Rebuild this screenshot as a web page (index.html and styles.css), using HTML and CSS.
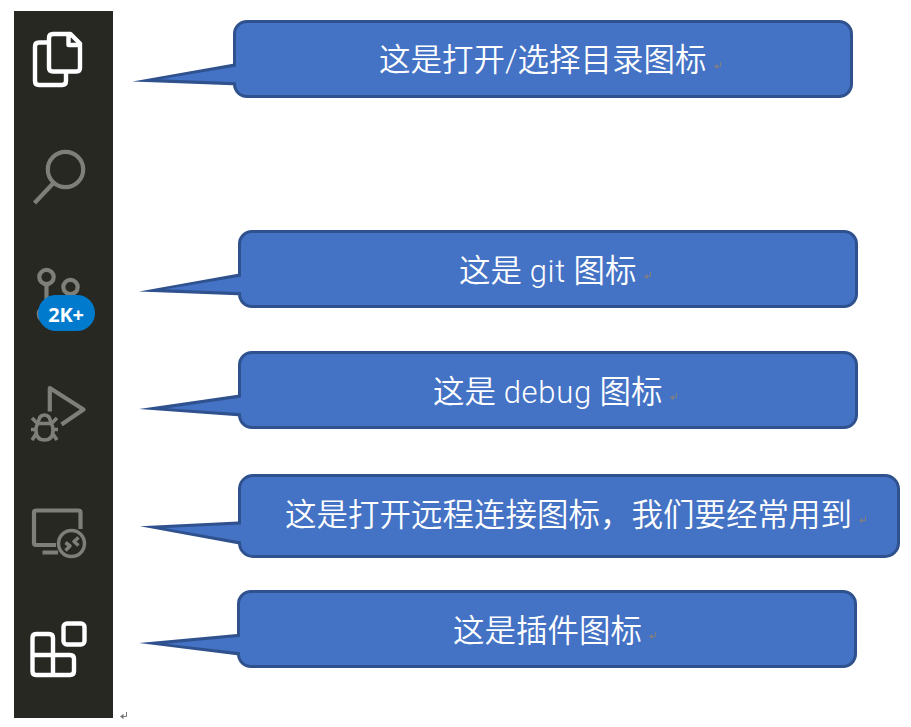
FILE: index.html
```html
<!DOCTYPE html>
<html lang="zh-CN">
<head>
<meta charset="utf-8">
<title>VS Code 图标说明</title>
<link rel="stylesheet" href="styles.css">
</head>
<body>
<svg class="defs" width="0" height="0" aria-hidden="true">
  <symbol id="ret" viewBox="0 0 8 8"><path d="M6.500 0V4.500H1.500" fill="none" stroke="currentColor" stroke-width="1"/><path d="M0 4.500L3.500 1.800V7.200Z" fill="currentColor"/></symbol>
</svg>
<main class="page">
  <nav class="bar">
    <svg class="icon bright" viewBox="0 0 99 118">
      <path d="M35 31.500H25Q21 31.500 21 35.500V70Q21 74 25 74H48Q52 74 52 70V62M39 23H56.500L66 32.500V57Q66 60.500 62.500 60.500H39Q35 60.500 35 57V27Q35 23 39 23ZM54.500 23V34H66" />
    </svg>
    <svg class="icon" viewBox="0 0 99 118">
      <circle cx="51.500" cy="40.500" r="17.700"/><path d="M39.500 54L20.500 74"/>
    </svg>
    <div class="scm">
      <svg class="icon" viewBox="0 0 99 118">
        <circle cx="32.500" cy="30" r="7.200"/><circle cx="56.500" cy="40" r="7.200"/><circle cx="32" cy="67" r="7.200"/><path d="M32.500 37V60M56.500 47Q56.500 58 43 58"/>
      </svg>
      <span class="badge">2K+</span>
    </div>
    <svg class="icon" viewBox="0 0 99 118">
      <path d="M35.800 46.500V23L69.500 44.500L47.500 59.500"/>
      <path class="bug" d="M22.500 58.500H38.500M24.500 58.500Q22 60 22 65Q22 75 30.500 75Q39 75 39 65Q39 60 36.500 58.500M24.500 58.500Q24.500 50 30.500 50Q36.500 50 36.500 58.500M18 53L23 58M17 64.500H22M22 69L18 75M43 53L38 58M44 64.500H39M39 69L43 75"/>
    </svg>
    <svg class="icon" viewBox="0 0 99 118">
      <path d="M66.500 46V29.500Q66.500 27.500 64.500 27.500H22Q20 27.500 20 29.500V60Q20 62 22 62H42M28.500 69.500H44"/>
      <circle class="thin" cx="57.500" cy="60.500" r="13"/>
      <path class="thin" d="M51.500 59.500L56 63L51.500 67.500M64.500 54.500L60 58.500L64.500 62.500"/>
    </svg>
    <svg class="icon bright" viewBox="0 0 99 118">
      <path d="M22 33H35Q39 33 39 37V54H56Q60 54 60 58V70Q60 74 56 74H22Q18.500 74 18.500 70V37Q18.500 33 22 33ZM18.500 54H39V74"/>
      <rect x="49.500" y="22.500" width="21" height="21" rx="3.500"/>
    </svg>
  </nav>
  <svg class="ret end"><use href="#ret"/></svg>
  <section class="notes">
    <div class="note n1">
      <svg class="tail" viewBox="0 0 108 84"><path class="edge" d="M3.500 61.400L104 43.800H107V65.300H104Z"/><path class="fill" d="M31 59.300L107.500 46.500V62.300Z"/></svg>
      <span class="text">这是打开/选择目录图标</span><svg class="ret"><use href="#ret"/></svg>
    </div>
    <div class="note n2">
      <svg class="tail" viewBox="0 0 108 84"><path class="edge" d="M5 61.400L104 43.800H107V65.300H104Z"/><path class="fill" d="M31 59.300L107.500 46.500V62.300Z"/></svg>
      <span class="text">这是 <span class="latin">git</span> 图标</span><svg class="ret"><use href="#ret"/></svg>
    </div>
    <div class="note n3">
      <svg class="tail" viewBox="0 0 108 84"><path class="edge" d="M5 58L104 43.800H107V65.300H104Z"/><path class="fill" d="M33 57.300L107.500 46.500V62.300Z"/></svg>
      <span class="text">这是 <span class="latin">debug</span> 图标</span><svg class="ret"><use href="#ret"/></svg>
    </div>
    <div class="note n4">
      <svg class="tail" viewBox="0 0 108 84"><path class="edge" d="M6 52.300L104 47.600H107V70.200H104Z"/><path class="fill" d="M30 54L107.500 50.500V67.500Z"/></svg>
      <span class="text">这是打开远程连接图标，我们要经常用到</span><svg class="ret"><use href="#ret"/></svg>
    </div>
    <div class="note n5">
      <svg class="tail" viewBox="0 0 108 84"><path class="edge" d="M6 53L104 44H107V65.300H104Z"/><path class="fill" d="M33 53.700L107.500 46.700V62.300Z"/></svg>
      <span class="text">这是插件图标</span><svg class="ret"><use href="#ret"/></svg>
    </div>
  </section>
</main>
</body>
</html>
```
FILE: styles.css
```css
* { box-sizing: border-box; }
body { margin: 0; background: #fff; overflow: hidden; }
.defs { position: absolute; }
.page {
  display: flex;
  width: 911px;
  height: 727px;
  padding: 11px 0 0 14px;
}
.bar {
  width: 99px;
  height: 707px;
  background: #272822;
  flex: none;
  overflow: hidden;
}
.icon {
  display: block;
  width: 99px;
  height: 118px;
  fill: none;
  stroke: #7f7f79;
  stroke-width: 4.2;
  stroke-linejoin: round;
}
.bright { stroke: #fff; stroke-width: 4.4; }
.thin { stroke-width: 3.5; }
.bug { stroke-width: 3.6; }
.scm { position: relative; }
.badge {
  position: absolute;
  left: 24px;
  top: 48px;
  width: 57px;
  height: 36px;
  border-radius: 18px;
  background: #007acc;
  color: #fff;
  font: 700 20px/39px "Open Sans", "Noto Sans", sans-serif;
  letter-spacing: -0.3px;
  padding-right: 1px;
  text-align: center;
}
.ret { width: 8px; height: 8px; color: #807f80; flex: none; }
.end { align-self: flex-end; margin: 0 0 7px 7px; color: #777; }
.notes {
  display: flex;
  flex-direction: column;
  margin: 9px 0 0 110px;
  width: 670px;
}
.note {
  position: relative;
  display: flex;
  align-items: center;
  flex: none;
  width: 620px;
  height: 78px;
  border: 3px solid #2f528f;
  border-radius: 14px;
  background: #4472c4;
  color: #fff;
}
.n1 { margin-left: -5px; padding-left: 143px; }
.n2 { margin-top: 132px; padding-left: 218px; }
.n3 { margin-top: 43px; padding-left: 192px; }
.n4 { margin-top: 45px; width: 662px; height: 84px; padding: 0 0 6px 44px; border-radius: 15px; }
.n5 { margin-top: 32px; margin-left: -1px; padding-left: 213px; }
.tail {
  position: absolute;
  left: -107px;
  top: -3px;
  width: 108px;
  height: 84px;
}
.edge { fill: #2f528f; }
.fill { fill: #4472c4; }
.text {
  padding-top: 5px;
  font: 350 31.5px/44px Roboto, "Noto Sans CJK SC", sans-serif;
  white-space: nowrap;
}
.n1 .text { padding-top: 3px; }
.latin { font-weight: 300; font-size: 31px; line-height: 1; letter-spacing: 0.7px; }
.note .ret { margin: 13px 0 0 7px; }
```
